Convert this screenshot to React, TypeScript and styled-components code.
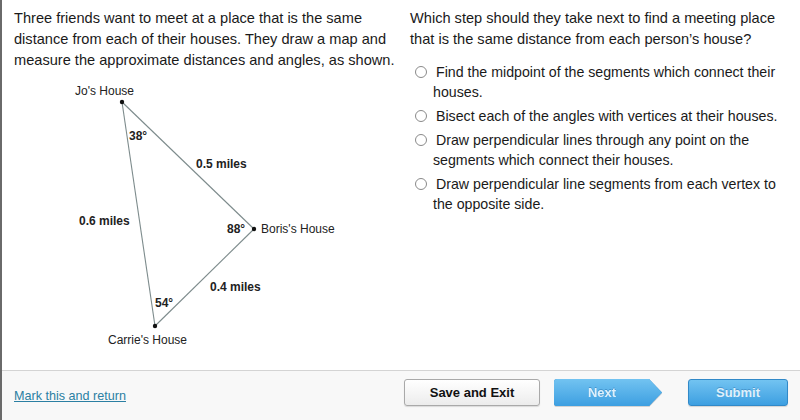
import styled, { createGlobalStyle } from "styled-components";

const GlobalStyle = createGlobalStyle`
  html, body {
    margin: 0;
    padding: 0;
    background: #fff;
  }
  * {
    box-sizing: border-box;
  }
`;

const Page = styled.div`
  width: 800px;
  height: 420px;
  display: flex;
  flex-direction: column;
  border-left: 2px solid #6a6a6a;
  font-family: "Liberation Sans", Arial, sans-serif;
  color: #1a1a1a;
  overflow: hidden;
`;

const Main = styled.main`
  flex: 1;
  display: grid;
  grid-template-columns: 396px 1fr;
  padding: 8px 10px 0 12px;
`;

const Column = styled.section`
  display: flex;
  flex-direction: column;
`;

const Prompt = styled.p`
  margin: 0;
  font-size: 14.6px;
  line-height: 21px;
`;

const Diagram = styled.svg`
  margin-top: 10px;
  display: block;
  font-family: "Liberation Sans", Arial, sans-serif;
`;

const Options = styled.ul`
  list-style: none;
  margin: 12px 0 0;
  padding: 0 0 0 5px;
  display: flex;
  flex-direction: column;
  gap: 4px;
`;

const Option = styled.li`
  display: grid;
  grid-template-columns: 12px 1fr;
  column-gap: 6px;
  font-size: 14.2px;
  line-height: 20px;
`;

const Radio = styled.span`
  width: 12px;
  height: 12px;
  margin-top: 4px;
  border-radius: 50%;
  border: 1px solid #8a8a8a;
  background: #fff;
`;

const OptionText = styled.span`
  text-indent: 3px;
`;

const Footer = styled.footer`
  height: 50px;
  border-top: 1px solid #d4d4d4;
  background: #f8f8f8;
  display: flex;
  align-items: center;
  padding: 0 12px;
`;

const Link = styled.a`
  font-size: 12.6px;
  color: #2b7fa3;
  text-decoration: underline;
  margin-top: 1px;
  cursor: pointer;
`;

const Buttons = styled.div`
  margin-left: auto;
  margin-top: -6px;
  display: flex;
  align-items: center;
`;

const SaveButton = styled.button`
  width: 136px;
  height: 27px;
  border: 1px solid #a9a9a9;
  border-radius: 3px;
  background: linear-gradient(#ffffff, #ececec);
  font-family: "Liberation Sans", Arial, sans-serif;
  font-size: 13px;
  font-weight: bold;
  color: #111;
  box-shadow: 0 1px 1px rgba(0, 0, 0, 0.12);
`;

const NextWrap = styled.div`
  margin-left: 14px;
  filter: drop-shadow(0 0 0.6px #2f86c6) drop-shadow(0 1px 0.5px rgba(0, 0, 0, 0.15));
`;

const NextButton = styled.button`
  width: 108px;
  height: 27px;
  border: none;
  padding: 0 12px 0 0;
  background: linear-gradient(#72c3f1, #3d9fe1);
  clip-path: polygon(0 0, 88% 0, 100% 50%, 88% 100%, 0 100%);
  border-radius: 3px 0 0 3px;
  font-family: "Liberation Sans", Arial, sans-serif;
  font-size: 13px;
  font-weight: bold;
  color: #dff0fb;
  text-shadow: 0 -1px 0 rgba(30, 100, 160, 0.4);
`;

const SubmitButton = styled.button`
  margin-left: 26px;
  width: 100px;
  height: 27px;
  border: 1px solid #3189c8;
  border-radius: 3px;
  background: linear-gradient(#72c3f1, #3d9fe1);
  font-family: "Liberation Sans", Arial, sans-serif;
  font-size: 13px;
  font-weight: bold;
  color: #dff0fb;
  text-shadow: 0 -1px 0 rgba(30, 100, 160, 0.4);
  box-shadow: 0 1px 1px rgba(0, 0, 0, 0.15);
`;

const choices = [
  "Find the midpoint of the segments which connect their houses.",
  "Bisect each of the angles with vertices at their houses.",
  "Draw perpendicular lines through any point on the segments which connect their houses.",
  "Draw perpendicular line segments from each vertex to the opposite side.",
];

const jo = { x: 108, y: 21 };
const boris = { x: 240, y: 148 };
const carrie = { x: 141, y: 245 };

const TriangleMap = () => (
  <Diagram width="386" height="270" viewBox="0 0 386 270">
    <g stroke="#7d8b8c" strokeWidth="1.1" fill="none">
      <line x1={jo.x} y1={jo.y} x2={boris.x} y2={boris.y} />
      <line x1={boris.x} y1={boris.y} x2={carrie.x} y2={carrie.y} />
      <line x1={carrie.x} y1={carrie.y} x2={jo.x} y2={jo.y} />
    </g>
    <g fill="#111">
      <circle cx={jo.x} cy={jo.y} r="2.2" />
      <circle cx={boris.x} cy={boris.y} r="2.2" />
      <circle cx={carrie.x} cy={carrie.y} r="2.2" />
    </g>
    <g fontSize="12" fill="#222">
      <text x="61" y="14">Jo's House</text>
      <text x="247" y="152">Boris's House</text>
      <text x="94" y="263">Carrie's House</text>
    </g>
    <g fontSize="12" fontWeight="bold" fill="#222">
      <text x="115" y="59">38°</text>
      <text x="182" y="87">0.5 miles</text>
      <text x="65" y="144">0.6 miles</text>
      <text x="213" y="152">88°</text>
      <text x="196" y="210">0.4 miles</text>
      <text x="141" y="226">54°</text>
    </g>
  </Diagram>
);

const App = () => (
  <>
    <GlobalStyle />
    <Page>
      <Main>
        <Column>
          <Prompt>
            Three friends want to meet at a place that is the same distance
            from each of their houses. They draw a map and measure the
            approximate distances and angles, as shown.
          </Prompt>
          <TriangleMap />
        </Column>
        <Column>
          <Prompt>
            Which step should they take next to find a meeting place that is
            the same distance from each person’s house?
          </Prompt>
          <Options>
            {choices.map((c) => (
              <Option key={c}>
                <Radio />
                <OptionText>{c}</OptionText>
              </Option>
            ))}
          </Options>
        </Column>
      </Main>
      <Footer>
        <Link>Mark this and return</Link>
        <Buttons>
          <SaveButton>Save and Exit</SaveButton>
          <NextWrap>
            <NextButton>Next</NextButton>
          </NextWrap>
          <SubmitButton>Submit</SubmitButton>
        </Buttons>
      </Footer>
    </Page>
  </>
);

export default App;
